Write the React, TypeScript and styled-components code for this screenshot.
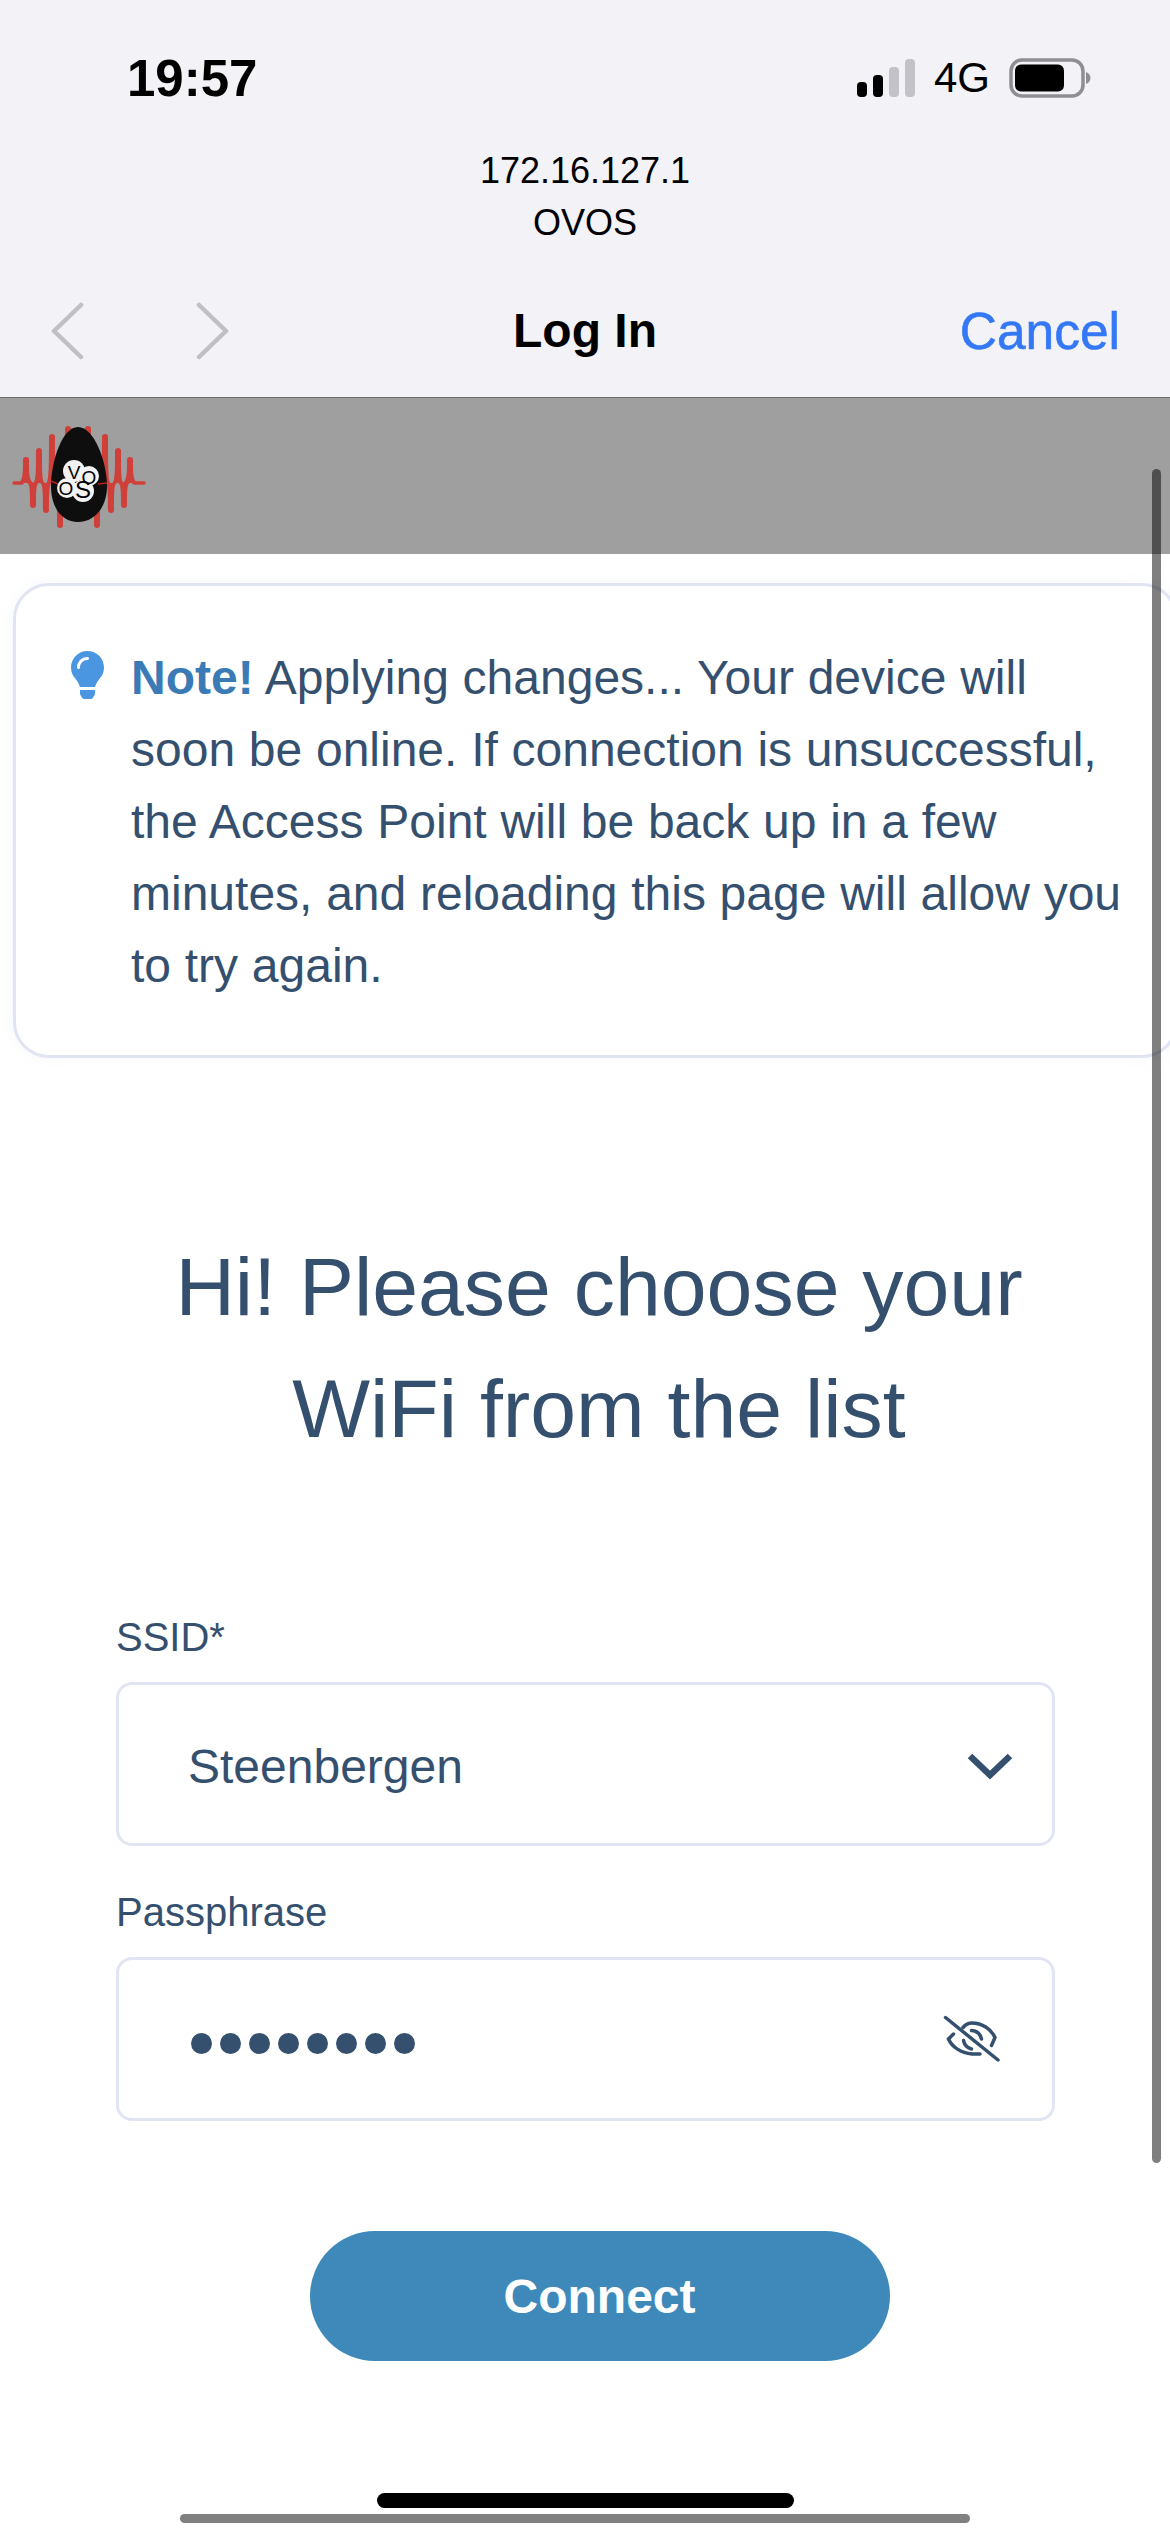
import React from "react";
import styled, { createGlobalStyle } from "styled-components";
import { FaLightbulb } from "react-icons/fa";

const GlobalStyle = createGlobalStyle`
  html, body {
    margin: 0;
    padding: 0;
    background: #ffffff;
  }
  body {
    font-family: "Liberation Sans", Arial, sans-serif;
  }
`;

const Page = styled.div`
  position: relative;
  display: flex;
  flex-direction: column;
  width: 1170px;
  height: 2532px;
  overflow: hidden;
  background: #ffffff;
  color: #34506e;
`;

const BrowserHeader = styled.header`
  display: flex;
  flex-direction: column;
  height: 398px;
  box-sizing: border-box;
  background: #f2f2f7;
  border-bottom: 1px solid #6c6c6c;
  color: #000000;
`;

const StatusBar = styled.div`
  display: flex;
  align-items: center;
  justify-content: space-between;
  height: 145px;
  box-sizing: border-box;
  padding: 11px 79px 0 127px;
`;

const Clock = styled.span`
  font-size: 51px;
  font-weight: 700;
`;

const StatusIcons = styled.div`
  display: flex;
  align-items: center;
`;

const Network = styled.span`
  margin: 0 19px;
  font-size: 42px;
`;

const Address = styled.div`
  font-size: 36px;
  line-height: 52px;
  text-align: center;
`;

const NavRow = styled.div`
  display: grid;
  grid-template-columns: 1fr auto 1fr;
  align-items: center;
  flex: 1;
  padding: 15px 50px 0;
`;

const NavArrows = styled.div`
  display: flex;
  gap: 112px;
`;

const Title = styled.div`
  font-size: 48px;
  font-weight: 700;
`;

const CancelLink = styled.div`
  justify-self: end;
  font-size: 51.5px;
  color: #3478f6;
  -webkit-text-stroke: 0.6px #3478f6;
`;

const LogoBand = styled.div`
  display: flex;
  height: 156px;
  flex-shrink: 0;
  background: #9f9f9f;
`;

const NoteCard = styled.section`
  display: flex;
  flex-shrink: 0;
  gap: 27px;
  width: 1165px;
  height: 475px;
  box-sizing: border-box;
  margin: 29px 0 0 13px;
  padding: 56px 0 0 55px;
  background: #ffffff;
  border: 3px solid #e1e4f2;
  border-radius: 36px;
  box-shadow: 0 0 14px rgba(225, 228, 242, 0.25);
`;

const NoteIcon = styled(FaLightbulb)`
  flex-shrink: 0;
  width: 33px;
  height: 48px;
  margin-top: 9px;
  color: #4a96e0;
`;

const NoteText = styled.p`
  width: 1000px;
  margin: 0;
  font-size: 48px;
  line-height: 72px;
  word-spacing: 0.4px;
`;

const NoteLabel = styled.strong`
  color: #3a7ab5;
`;

const Heading = styled.h1`
  margin: 167px 0 0;
  padding-left: 28px;
  font-size: 82.4px;
  font-weight: 400;
  line-height: 122px;
  text-align: center;
`;

const Form = styled.form`
  display: flex;
  flex-direction: column;
  margin: 143px 0 0 116px;
  width: 939px;
`;

const FieldLabel = styled.label<{ $spaced?: boolean }>`
  margin-top: ${(p) => (p.$spaced ? "41px" : "0")};
  margin-bottom: 20px;
  font-size: 40px;
  line-height: 50px;
`;

const Field = styled.div`
  display: flex;
  align-items: center;
  justify-content: space-between;
  height: 164px;
  box-sizing: border-box;
  padding-left: 69px;
  border: 3px solid #e1e4f2;
  border-radius: 16px;
  font-size: 48px;
`;

const FieldValue = styled.span`
  padding-top: 5px;
`;

const FieldIcon = styled.svg<{ $inset: number; $drop?: number }>`
  margin-right: ${(p) => p.$inset}px;
  margin-top: ${(p) => p.$drop ?? 0}px;
`;

const Mask = styled.div`
  display: flex;
  gap: 8px;
  padding: 8px 0 0 3px;
`;

const MaskDot = styled.span`
  width: 21px;
  height: 21px;
  border-radius: 50%;
  background: #34506e;
`;

const ConnectButton = styled.button`
  align-self: center;
  width: 580px;
  height: 130px;
  margin: 110px 0 0 28px;
  padding: 0;
  border: none;
  border-radius: 65px;
  background: #3e89ba;
  color: #ffffff;
  font-family: inherit;
  font-size: 48px;
  font-weight: 700;
`;

const ScrollThumb = styled.div`
  position: absolute;
  top: 469px;
  left: 1152px;
  width: 9px;
  height: 1694px;
  border-radius: 5px;
  background: rgba(0, 0, 0, 0.5);
`;

const HomeIndicator = styled.div`
  position: absolute;
  top: 2493px;
  left: 377px;
  width: 417px;
  height: 15px;
  border-radius: 8px;
  background: #000000;
`;

const ScrollThumbX = styled.div`
  position: absolute;
  top: 2514px;
  left: 180px;
  width: 790px;
  height: 9px;
  border-radius: 5px;
  background: #808080;
`;

const SignalIcon = () => (
  <svg width="58" height="38" viewBox="0 0 58 38">
    <rect x="0" y="23" width="10" height="15" rx="4" fill="#000" />
    <rect x="16" y="16" width="10" height="22" rx="4" fill="#000" />
    <rect x="32" y="8" width="10" height="30" rx="4" fill="#c2c2c8" />
    <rect x="48" y="0" width="10" height="38" rx="4" fill="#c2c2c8" />
  </svg>
);

const BatteryIcon = () => (
  <svg width="82" height="40" viewBox="0 0 82 40">
    <rect x="2" y="2" width="72" height="36" rx="11" fill="none" stroke="#8e8e93" strokeWidth="3.500" />
    <rect x="6" y="6.500" width="49" height="27" rx="6" fill="#000" />
    <path d="M77 14c3 1 4.500 3.500 4.500 6s-1.500 5-4.500 6z" fill="#8e8e93" />
  </svg>
);

const BackArrow = () => (
  <svg width="34" height="58" viewBox="0 0 34 58">
    <path d="M31 3 L4 29 L31 55" fill="none" stroke="#c0c0c4" strokeWidth="4.500" strokeLinecap="round" strokeLinejoin="round" />
  </svg>
);

const ForwardArrow = () => (
  <svg width="34" height="58" viewBox="0 0 34 58">
    <path d="M3 3 L30 29 L3 55" fill="none" stroke="#c0c0c4" strokeWidth="4.500" strokeLinecap="round" strokeLinejoin="round" />
  </svg>
);

// x and tip of each spike of the wave form, the base line sits at y=85
const spikes: [number, number][] = [
  [26, 59],
  [33, 110],
  [39, 50],
  [46, 115],
  [52, 36],
  [60, 130],
  [68, 28],
  [88, 28],
  [97, 130],
  [105, 36],
  [111, 115],
  [118, 50],
  [124, 110],
  [130, 59],
];

const spikePath = ([x, tip]: [number, number]) => {
  const up = tip < 85;
  const w = x === 26 || x === 130 ? 9 : 6;
  const neck = up ? tip + 3 : tip - 3;
  const mid = up ? 85 - (85 - tip) * 0.4 : 85 + (tip - 85) * 0.4;
  const sweep = up ? 1 : 0;
  return `M${x - w} 85 C${x - 3} 85 ${x - 3} ${mid} ${x - 3} ${neck} A3 3 0 0 ${sweep} ${x + 3} ${neck} C${x + 3} ${mid} ${x + 3} 85 ${x + w} 85 Z`;
};

const Logo = () => (
  <svg width="160" height="156" viewBox="0 0 160 156">
    <path d="M14 85 H22 M134 85 H144" stroke="#cf403b" strokeWidth="3.500" strokeLinecap="round" />
    {spikes.map((s) => (
      <path key={s[0]} d={spikePath(s)} fill="#cf403b" />
    ))}
    <path d="M78 29 C94 29 107 64 107 88 C107 110 94 124 78 124 C62 124 51 110 51 88 C51 64 62 29 78 29 Z" fill="#0e0e0e" />
    <path d="M51 83 L58 86 M98 86 L107 85" stroke="#b3211d" strokeWidth="1.500" />
    <circle cx="74" cy="73" r="11" fill="#f2f2f2" />
    <circle cx="89" cy="78" r="10" fill="#f2f2f2" />
    <circle cx="67" cy="90" r="10" fill="#f2f2f2" />
    <circle cx="83" cy="93" r="11" fill="#f2f2f2" />
    <g fontFamily="'Liberation Sans', Arial, sans-serif" fill="#000" textAnchor="middle">
      <text x="74" y="81" fontSize="19">V</text>
      <text x="89" y="86" fontSize="19">O</text>
      <text x="66" y="97" fontSize="19">O</text>
      <text x="83" y="100" fontSize="24">S</text>
    </g>
  </svg>
);

const ChevronDown = () => (
  <FieldIcon $inset={39} $drop={3} width="46" height="28" viewBox="0 0 46 28">
    <path d="M3 4 L23 23 L43 4" fill="none" stroke="#34506e" strokeWidth="6.500" />
  </FieldIcon>
);

const EyeOff = () => (
  <FieldIcon $inset={50} width="60" height="50" viewBox="0 0 60 50">
    <g fill="none" stroke="#34506e" strokeWidth="3.500" strokeLinecap="round">
      <path d="M3.500 3.500 L56 46" />
      <path d="M21 13.500 C24 10 27 9 30 9 C40 9 49 15 53 23.500 L49.500 31.500" />
      <path d="M11.500 20 L6.500 25 C10 33 19 39 30 40 L38 40" />
      <path d="M29.500 16.500 C35 17 38.500 20 39.500 25" />
      <path d="M21.500 26.500 C22.500 31 25.500 34 29.500 35" />
    </g>
  </FieldIcon>
);

const App = () => {
  return (
    <Page>
      <GlobalStyle />
      <BrowserHeader>
        <StatusBar>
          <Clock>19:57</Clock>
          <StatusIcons>
            <SignalIcon />
            <Network>4G</Network>
            <BatteryIcon />
          </StatusIcons>
        </StatusBar>
        <Address>
          <div>172.16.127.1</div>
          <div>OVOS</div>
        </Address>
        <NavRow>
          <NavArrows>
            <BackArrow />
            <ForwardArrow />
          </NavArrows>
          <Title>Log In</Title>
          <CancelLink>Cancel</CancelLink>
        </NavRow>
      </BrowserHeader>

      <LogoBand>
        <Logo />
      </LogoBand>

      <NoteCard>
        <NoteIcon />
        <NoteText>
          <NoteLabel>Note!</NoteLabel> Applying changes... Your device will soon
          be online. If connection is unsuccessful, the Access Point will be back
          up in a few minutes, and reloading this page will allow you to try
          again.
        </NoteText>
      </NoteCard>

      <Heading>
        Hi! Please choose your
        <br />
        WiFi from the list
      </Heading>

      <Form>
        <FieldLabel>SSID*</FieldLabel>
        <Field>
          <FieldValue>Steenbergen</FieldValue>
          <ChevronDown />
        </Field>
        <FieldLabel $spaced>Passphrase</FieldLabel>
        <Field>
          <Mask>
            {Array.from({ length: 8 }).map((_, i) => (
              <MaskDot key={i} />
            ))}
          </Mask>
          <EyeOff />
        </Field>
        <ConnectButton type="button">Connect</ConnectButton>
      </Form>

      <ScrollThumb />
      <HomeIndicator />
      <ScrollThumbX />
    </Page>
  );
};

export default App;
